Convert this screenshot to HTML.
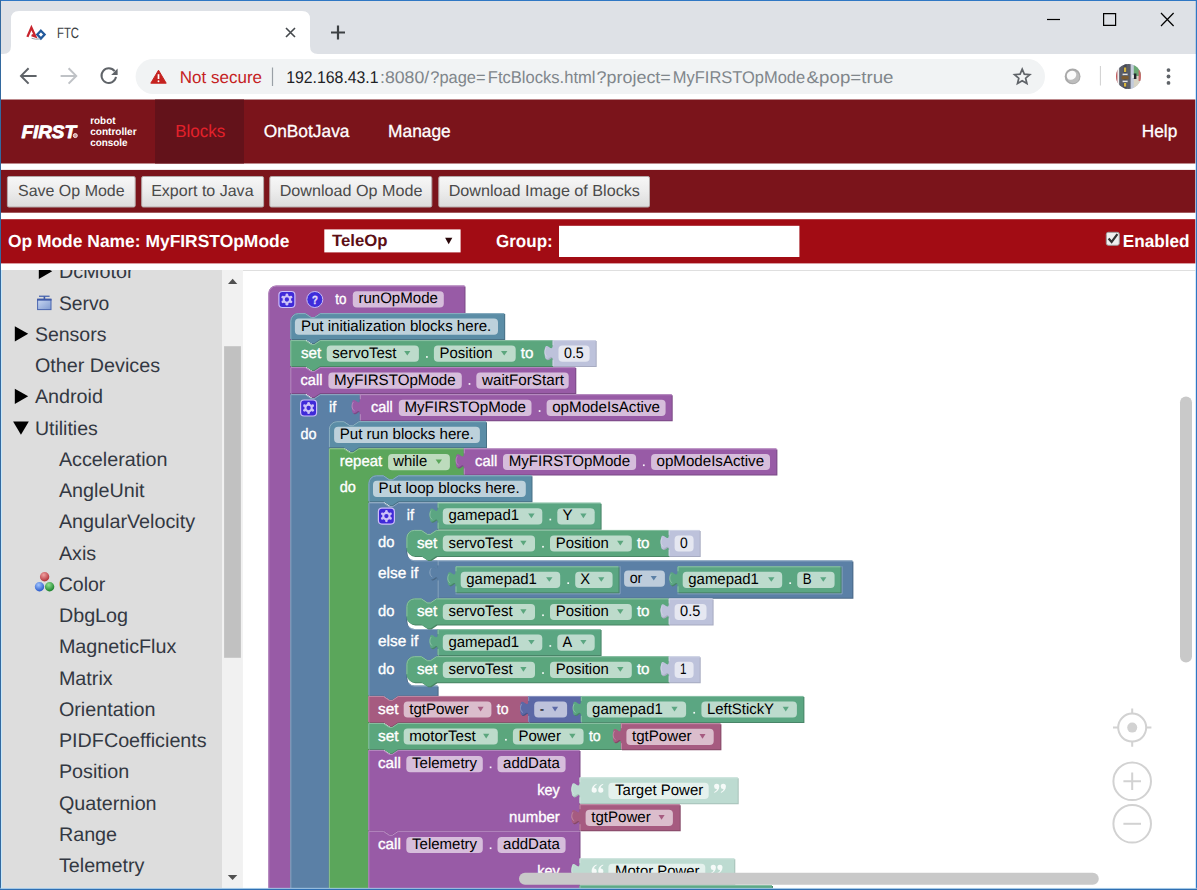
<!DOCTYPE html>
<html><head><meta charset="utf-8"><title>FTC</title>
<style>
html,body{margin:0;padding:0;background:#fff;overflow:hidden;}
body{width:1197px;height:890px;font-family:"Liberation Sans",sans-serif;}
svg{display:block;position:absolute;left:0;top:0;}
text{white-space:pre;font-family:"Liberation Sans",sans-serif;}
</style></head><body>
<svg width="1197" height="890" viewBox="0 0 1197 890" font-family="Liberation Sans, sans-serif" text-rendering="geometricPrecision">
<rect x="0" y="0" width="1197" height="890" fill="#ffffff"/>
<rect x="0" y="0" width="1197" height="54" fill="#dee1e6"/>
<path d="M3 54 Q11 54 11 46 L11 19 Q11 11 19 11 L302 11 Q310 11 310 19 L310 46 Q310 54 318 54 Z" fill="#ffffff"/>
<rect x="0" y="54" width="1197" height="45.5" fill="#ffffff"/>
<g>
<path d="M27.4 36.9 L31.4 27.6 L35.4 36.6 L31.6 35.2" fill="none" stroke="#c8242d" stroke-width="2.3" stroke-linejoin="miter"/>
<path d="M40.9 30.7 L44.6 34.5 L40.9 38.5 L37.3 34.5 Z" fill="none" stroke="#21599c" stroke-width="2.3"/>
<path d="M31.6 38.3 Q35.6 39.8 40.2 38.9" fill="none" stroke="#9aa0aa" stroke-width="1"/>
</g>
<text x="57" y="37.6" font-size="15" fill="#3c4043" textLength="21.99" lengthAdjust="spacingAndGlyphs">FTC</text>
<path d="M286 28 L295 37 M295 28 L286 37" fill="none" stroke="#45494d" stroke-width="1.6"/>
<path d="M331 32.5 L345 32.5 M338 25.5 L338 39.5" fill="none" stroke="#3c4043" stroke-width="2.2"/>
<path d="M1047 19.5 L1060 19.5" fill="none" stroke="#000" stroke-width="1.2"/>
<path d="M1103.6 13.6 L1115.6 13.6 L1115.6 25.4 L1103.6 25.4 Z" fill="none" stroke="#000" stroke-width="1.2"/>
<path d="M1161 13 L1173.6 26 M1173.6 13 L1161 26" fill="none" stroke="#000" stroke-width="1.2"/>
<path d="M36.6 75.9 L22 75.9 M28.6 68.2 L21 75.9 L28.6 83.6" fill="none" stroke="#5f6368" stroke-width="2" stroke-linejoin="miter"/>
<path d="M60.6 75.9 L75.2 75.9 M68.6 68.2 L76.2 75.9 L68.6 83.6" fill="none" stroke="#bfc2c6" stroke-width="2"/>
<path d="M114.6 71.2 A7.3 7.3 0 1 0 116 76.9" fill="none" stroke="#5f6368" stroke-width="2"/>
<path d="M117.6 68.6 L117.6 75 L111.2 75 Z" fill="#5f6368"/>
<rect x="135.6" y="59" width="909.4" height="35" fill="#f1f3f4" rx="17.5"/>
<path d="M158.5 70.2 L166.2 83.2 L150.8 83.2 Z" fill="#c5221f" stroke="#c5221f" stroke-width="1" stroke-linejoin="round"/>
<path d="M158.5 74.2 L158.5 79" fill="none" stroke="#fff" stroke-width="1.7"/>
<circle cx="158.5" cy="81.2" r="0.95" fill="#fff"/>
<text x="179.8" y="83" font-size="17" fill="#c5221f" textLength="82.21" lengthAdjust="spacingAndGlyphs">Not secure</text>
<path d="M272.5 67.5 L272.5 86" fill="none" stroke="#9aa0a6" stroke-width="1.2"/>
<text x="286.2" y="83" font-size="17" fill="#202124" textLength="92.38" lengthAdjust="spacingAndGlyphs">192.168.43.1</text>
<text x="380" y="83" font-size="17" fill="#80868b" textLength="49.22" lengthAdjust="spacingAndGlyphs">:8080/</text>
<text x="430.3" y="83" font-size="17" fill="#80868b" textLength="55.3" lengthAdjust="spacingAndGlyphs">?page=</text>
<text x="487.8" y="83" font-size="17" fill="#80868b" textLength="107.72" lengthAdjust="spacingAndGlyphs">FtcBlocks.html</text>
<text x="596.6" y="83" font-size="17" fill="#80868b" textLength="74.23" lengthAdjust="spacingAndGlyphs">?project=</text>
<text x="672.8" y="83" font-size="17" fill="#80868b" textLength="132.39" lengthAdjust="spacingAndGlyphs">MyFIRSTOpMode</text>
<text x="806.6" y="83" font-size="17" fill="#80868b" textLength="86.96" lengthAdjust="spacingAndGlyphs">&amp;pop=true</text>
<path d="M1022.2 69.1 L1024.32 74.19 L1029.81 74.63 L1025.62 78.21 L1026.9 83.57 L1022.2 80.7 L1017.5 83.57 L1018.78 78.21 L1014.59 74.63 L1020.08 74.19 Z" fill="none" stroke="#5f6368" stroke-width="1.7" stroke-linejoin="miter"/>
<circle cx="1072.6" cy="76.4" r="7.9" fill="#a9a9a9"/>
<circle cx="1073.2" cy="77" r="6.2" fill="#bdbdbd"/>
<ellipse cx="1071.5" cy="75.3" rx="5" ry="4.3" fill="#fbfbfb" transform="rotate(-35 1071.5 75.3)"/>
<path d="M1100.4 66 L1100.4 85.5" fill="none" stroke="#cfcfcf" stroke-width="1"/>
<clipPath id="av"><circle cx="1128.5" cy="76.4" r="12.5"/></clipPath>
<g clip-path="url(#av)">
<rect x="1115" y="63" width="28" height="28" fill="#c9ccd6"/>
<rect x="1115" y="63" width="2.6" height="28" fill="#c45a5a"/>
<rect x="1117.6" y="63" width="1.6" height="28" fill="#eeeeee"/>
<rect x="1119.2" y="63" width="11.6" height="28" fill="#5a5d68"/>
<rect x="1123.6" y="63" width="3" height="28" fill="#474a55"/>
<rect x="1124" y="67.5" width="2.2" height="4.5" fill="#d9b63c"/>
<rect x="1122.6" y="73.6" width="5" height="1.6" fill="#e6e6e6"/>
<rect x="1121.6" y="76" width="7" height="3.4" fill="#7a5a30"/>
<rect x="1122.6" y="80.6" width="5" height="1.6" fill="#e6e6e6"/>
<rect x="1124" y="83" width="2.2" height="3.6" fill="#d9b63c"/>
<rect x="1130.8" y="63" width="3" height="28" fill="#c3cbdc"/>
<rect x="1133.8" y="63" width="7" height="13" fill="#6aa873"/>
<rect x="1133.8" y="76" width="7" height="15" fill="#d8d4c4"/>
<rect x="1133.8" y="73.5" width="2.6" height="5.5" fill="#22252b"/>
<rect x="1132" y="75" width="1.8" height="3" fill="#e8e8e8"/>
<rect x="1138.6" y="70" width="3" height="11" fill="#c86a6a"/>
</g>
<circle cx="1168.5" cy="70.1" r="1.9" fill="#5f6368"/>
<circle cx="1168.5" cy="76.5" r="1.9" fill="#5f6368"/>
<circle cx="1168.5" cy="82.9" r="1.9" fill="#5f6368"/>
<rect x="0" y="99.5" width="1197" height="64" fill="#7b141b"/>
<rect x="155" y="99.5" width="89" height="64" fill="#63121a"/>
<text x="21.4" y="138" font-size="18" fill="#fff" font-weight="bold" font-style="italic" textLength="54.56" lengthAdjust="spacingAndGlyphs" stroke="#fff" stroke-width="0.8" stroke-linejoin="round">FIRST</text>
<circle cx="75.3" cy="135.6" r="2.0" fill="#c99" stroke="#f6e6e6" stroke-width="1.0"/>
<text x="90.2" y="123.9" font-size="10.4" fill="#fff" font-weight="bold" textLength="25.3" lengthAdjust="spacingAndGlyphs">robot</text>
<text x="90.2" y="134.8" font-size="10.4" fill="#fff" font-weight="bold" textLength="46.42" lengthAdjust="spacingAndGlyphs">controller</text>
<text x="90.2" y="145.6" font-size="10.4" fill="#fff" font-weight="bold" textLength="37.39" lengthAdjust="spacingAndGlyphs">console</text>
<text x="175.2" y="136.7" font-size="17.5" fill="#e3212b" textLength="50.11" lengthAdjust="spacingAndGlyphs">Blocks</text>
<text x="263.7" y="136.7" font-size="17.5" fill="#fff" textLength="85.75" lengthAdjust="spacingAndGlyphs" stroke="#fff" stroke-width="0.3">OnBotJava</text>
<text x="388" y="136.7" font-size="17.5" fill="#fff" textLength="62.78" lengthAdjust="spacingAndGlyphs" stroke="#fff" stroke-width="0.3">Manage</text>
<text x="1141.8" y="136.7" font-size="17.5" fill="#fff" textLength="35.43" lengthAdjust="spacingAndGlyphs" stroke="#fff" stroke-width="0.3">Help</text>
<rect x="0" y="169.9" width="1197" height="42.8" fill="#7b141b"/>
<defs><linearGradient id="btn" x1="0" y1="0" x2="0" y2="1"><stop offset="0" stop-color="#f7f7f7"/><stop offset="0.45" stop-color="#ededed"/><stop offset="1" stop-color="#dcdcdc"/></linearGradient></defs>
<rect x="7.4" y="176.5" width="127.8" height="30.5" fill="url(#btn)" rx="1.5" stroke="#b4a9a9" stroke-width="1"/>
<text x="18" y="196.4" font-size="16" fill="#4a4a4a" textLength="106.61" lengthAdjust="spacingAndGlyphs">Save Op Mode</text>
<rect x="141.7" y="176.5" width="121.9" height="30.5" fill="url(#btn)" rx="1.5" stroke="#b4a9a9" stroke-width="1"/>
<text x="151.2" y="196.4" font-size="16" fill="#4a4a4a" textLength="102.35" lengthAdjust="spacingAndGlyphs">Export to Java</text>
<rect x="269.8" y="176.5" width="162" height="30.5" fill="url(#btn)" rx="1.5" stroke="#b4a9a9" stroke-width="1"/>
<text x="279.7" y="196.4" font-size="16" fill="#4a4a4a" textLength="142.68" lengthAdjust="spacingAndGlyphs">Download Op Mode</text>
<rect x="438.8" y="176.5" width="210.7" height="30.5" fill="url(#btn)" rx="1.5" stroke="#b4a9a9" stroke-width="1"/>
<text x="448.7" y="196.4" font-size="16" fill="#4a4a4a" textLength="191.19" lengthAdjust="spacingAndGlyphs">Download Image of Blocks</text>
<rect x="0" y="219.2" width="1197" height="44.2" fill="#a20c14"/>
<text x="7.9" y="246.9" font-size="17.5" fill="#fff" font-weight="bold" textLength="281.49" lengthAdjust="spacingAndGlyphs">Op Mode Name: MyFIRSTOpMode</text>
<rect x="324.3" y="229.4" width="136.3" height="23" fill="#fff"/>
<text x="332" y="246" font-size="16.5" fill="#5c0f15" font-weight="bold" textLength="55.51" lengthAdjust="spacingAndGlyphs">TeleOp</text>
<path d="M445.1 237.8 L452.3 237.8 L448.7 244.3 Z" fill="#2a070a"/>
<text x="496" y="246.9" font-size="17.5" fill="#fff" font-weight="bold" textLength="56.76" lengthAdjust="spacingAndGlyphs">Group:</text>
<rect x="559" y="225.8" width="240.4" height="31.2" fill="#fff"/>
<rect x="1106.3" y="232.3" width="13" height="13" fill="#efefef" rx="2" stroke="#9a9a9a" stroke-width="1"/>
<path d="M1108.6 238.6 L1111.6 242 L1117.4 234.2" fill="none" stroke="#333" stroke-width="2.2"/>
<text x="1122.8" y="247" font-size="17.5" fill="#fff" font-weight="bold" textLength="66.8" lengthAdjust="spacingAndGlyphs">Enabled</text>
<rect x="242.9" y="270" width="953" height="620" fill="#ffffff"/>
<rect x="242.9" y="270" width="953" height="0.9" fill="#dcdcdc"/>
<clipPath id="wsc"><rect x="243" y="271" width="953" height="617.3"/></clipPath>
<g clip-path="url(#wsc)" font-family="Liberation Sans, sans-serif">
<path d="M268.3 293.5 A8 8 0 0 1 276.3 285.5 H464.5 V313.1 H320.3 l-6 4 -3 0 -6 -4 h-7 a8 8 0 0 0 -8 8 v684 a8 8 0 0 0 8 8 H464.5 H276.3 A8 8 0 0 1 268.3 1005.1 Z" fill="#7a4985" transform="translate(1,1)"/>
<path d="M268.3 293.5 A8 8 0 0 1 276.3 285.5 H464.5 V313.1 H320.3 l-6 4 -3 0 -6 -4 h-7 a8 8 0 0 0 -8 8 v684 a8 8 0 0 0 8 8 H464.5 H276.3 A8 8 0 0 1 268.3 1005.1 Z" fill="#985ba6"/>
<path d="M268.8 1005.1 V293.5 A7.5 7.5 0 0 1 276.3 286 H464.5 M292.6 1010.8 a8 8 0 0 0 5.7 2.8 H464.5" fill="none" stroke="#b78cc1" stroke-width="1"/>
<rect x="278.9" y="291.5" width="16" height="16" rx="3.5" fill="#3f2ad8" stroke="#cdbdfa" stroke-width="1.2"/>
<circle cx="286.9" cy="294.8" r="1.35" fill="#cdc2f8"/>
<circle cx="282.83" cy="297.15" r="1.35" fill="#cdc2f8"/>
<circle cx="282.83" cy="301.85" r="1.35" fill="#cdc2f8"/>
<circle cx="286.9" cy="304.2" r="1.35" fill="#cdc2f8"/>
<circle cx="290.97" cy="301.85" r="1.35" fill="#cdc2f8"/>
<circle cx="290.97" cy="297.15" r="1.35" fill="#cdc2f8"/>
<circle cx="286.9" cy="299.5" r="3.2" fill="none" stroke="#cdc2f8" stroke-width="2.1"/>
<circle cx="314.8" cy="299.5" r="8" fill="#3e2ddb" stroke="#c8bdf5" stroke-width="1"/>
<text x="311.9" y="304" font-size="12" fill="#e2dbfb" font-weight="bold" textLength="5.91" lengthAdjust="spacingAndGlyphs" stroke="#e2dbfb" stroke-width="0.4">?</text>
<text x="335.2" y="303.5" font-size="15.2" fill="#fff" textLength="11.19" lengthAdjust="spacingAndGlyphs" stroke="#fff" stroke-width="0.35">to</text>
<rect x="352.8" y="291.2" width="91" height="16.2" fill="#d6bddb" rx="4"/>
<text x="358.4" y="303.3" font-size="15.2" fill="#000" textLength="79.51" lengthAdjust="spacingAndGlyphs">runOpMode</text>
<path d="M290.3 321.1 A8 8 0 0 1 298.3 313.1 H305.3 l6 4 3 0 6 -4 H504.2 V339.1 H320.3 l-6 4 -3 0 -6 -4 H290.3 Z" fill="#497185" transform="translate(1,1)"/>
<path d="M290.3 321.1 A8 8 0 0 1 298.3 313.1 H305.3 l6 4 3 0 6 -4 H504.2 V339.1 H320.3 l-6 4 -3 0 -6 -4 H290.3 Z" fill="#5b8da6"/>
<path d="M290.8 339.1 V321.1 A7.5 7.5 0 0 1 298.3 313.6 H305.3 l6 4 3 0 6 -4 H504.2" fill="none" stroke="#8cafc1" stroke-width="1"/>
<rect x="294.9" y="318.6" width="203.1" height="16.2" fill="#bdd1db" rx="4"/>
<text x="300.9" y="330.7" font-size="15.2" fill="#000" textLength="190.37" lengthAdjust="spacingAndGlyphs">Put initialization blocks here.</text>
<path d="M290.3 340.1 H305.3 l6 4 3 0 6 -4 H552.6 V366.1 H320.3 l-6 4 -3 0 -6 -4 H290.3 Z" fill="#498564" transform="translate(1,1)"/>
<path d="M290.3 340.1 H305.3 l6 4 3 0 6 -4 H552.6 V366.1 H320.3 l-6 4 -3 0 -6 -4 H290.3 Z" fill="#5ba67d"/>
<path d="M290.8 366.1 V340.6 H305.3 l6 4 3 0 6 -4 H552.6" fill="none" stroke="#8cc1a4" stroke-width="1"/>
<text x="300.9" y="357.7" font-size="15.2" fill="#fff" stroke="#fff" stroke-width="0.35">set</text>
<rect x="326.7" y="345.6" width="92.2" height="16.2" fill="#bddbcb" rx="4"/>
<text x="332.3" y="357.7" font-size="15.2" fill="#000" textLength="64.19" lengthAdjust="spacingAndGlyphs">servoTest</text>
<path d="M404.2 351 H410.4 L407.3 355.6 Z" fill="#5ba67d"/>
<rect x="426.05" y="356.1" width="1.7" height="1.7" fill="#fff" fill-opacity="0.95"/>
<rect x="433.9" y="345.6" width="81.8" height="16.2" fill="#bddbcb" rx="4"/>
<text x="439.6" y="357.7" font-size="15.2" fill="#000" textLength="53.07" lengthAdjust="spacingAndGlyphs">Position</text>
<path d="M501 351 H507.4 L504.2 355.6 Z" fill="#5ba67d"/>
<text x="520.8" y="357.7" font-size="15.2" fill="#fff" stroke="#fff" stroke-width="0.35">to</text>
<path d="M552.6 340.1 H595.7 V366.1 H552.6 V360.1 c 0,-10 -8,8 -8,-7.5 s 8,2.5 8,-7.5 Z" fill="#a7abc1" transform="translate(1,1)"/>
<path d="M552.6 340.1 H595.7 V366.1 H552.6 V360.1 c 0,-10 -8,8 -8,-7.5 s 8,2.5 8,-7.5 Z" fill="#bdc2db"/>
<path d="M553.1 366.1 V360.1 M553.1 345.1 V340.6 H595.7 M547.3 356.7 c -3,-1.5 -3,-6.2 -1.2,-8.6" fill="none" stroke="#d1d5e6" stroke-width="1"/>
<rect x="558.5" y="345.6" width="31.1" height="16.2" fill="#e5e7f1" rx="4"/>
<text x="564" y="357.7" font-size="15.2" fill="#000" textLength="19.8" lengthAdjust="spacingAndGlyphs">0.5</text>
<path d="M290.3 367.1 H305.3 l6 4 3 0 6 -4 H575.3 V393.1 H320.3 l-6 4 -3 0 -6 -4 H290.3 Z" fill="#7a4985" transform="translate(1,1)"/>
<path d="M290.3 367.1 H305.3 l6 4 3 0 6 -4 H575.3 V393.1 H320.3 l-6 4 -3 0 -6 -4 H290.3 Z" fill="#985ba6"/>
<path d="M290.8 393.1 V367.6 H305.3 l6 4 3 0 6 -4 H575.3" fill="none" stroke="#b78cc1" stroke-width="1"/>
<text x="300.6" y="384.7" font-size="15.2" fill="#fff" textLength="21.81" lengthAdjust="spacingAndGlyphs" stroke="#fff" stroke-width="0.35">call</text>
<rect x="328.4" y="372.6" width="133.4" height="16.2" fill="#d6bddb" rx="4"/>
<text x="334.1" y="384.7" font-size="15.2" fill="#000" textLength="121.59" lengthAdjust="spacingAndGlyphs">MyFIRSTOpMode</text>
<rect x="468.65" y="383.1" width="1.7" height="1.7" fill="#fff" fill-opacity="0.95"/>
<rect x="476.3" y="372.6" width="92.4" height="16.2" fill="#d6bddb" rx="4"/>
<text x="481.98" y="384.7" font-size="15.2" fill="#000" textLength="82.03" lengthAdjust="spacingAndGlyphs">waitForStart</text>
<path d="M290.3 394.2 H305.3 l6 4 3 0 6 -4 H359.8 V421.1 H358.9 l-6 4 -3 0 -6 -4 h-7 a8 8 0 0 0 -8 8 v684 a8 8 0 0 0 8 8 H359.8 H320.3 l-6 4 -3 0 -6 -4 H290.3 Z" fill="#496785" transform="translate(1,1)"/>
<path d="M290.3 394.2 H305.3 l6 4 3 0 6 -4 H359.8 V421.1 H358.9 l-6 4 -3 0 -6 -4 h-7 a8 8 0 0 0 -8 8 v684 a8 8 0 0 0 8 8 H359.8 H320.3 l-6 4 -3 0 -6 -4 H290.3 Z" fill="#5b80a6"/>
<path d="M290.8 1121.1 V394.7 H305.3 l6 4 3 0 6 -4 H359.8 M331.2 1118.8 a8 8 0 0 0 5.7 2.8 H359.8" fill="none" stroke="#8ca6c1" stroke-width="1"/>
<rect x="300.6" y="400" width="16" height="16" rx="3.5" fill="#3f2ad8" stroke="#cdbdfa" stroke-width="1.2"/>
<circle cx="308.6" cy="403.3" r="1.35" fill="#cdc2f8"/>
<circle cx="304.53" cy="405.65" r="1.35" fill="#cdc2f8"/>
<circle cx="304.53" cy="410.35" r="1.35" fill="#cdc2f8"/>
<circle cx="308.6" cy="412.7" r="1.35" fill="#cdc2f8"/>
<circle cx="312.67" cy="410.35" r="1.35" fill="#cdc2f8"/>
<circle cx="312.67" cy="405.65" r="1.35" fill="#cdc2f8"/>
<circle cx="308.6" cy="408" r="3.2" fill="none" stroke="#cdc2f8" stroke-width="2.1"/>
<text x="329" y="411.8" font-size="15.2" fill="#fff" textLength="7.3" lengthAdjust="spacingAndGlyphs" stroke="#fff" stroke-width="0.35">if</text>
<text x="300.6" y="438.7" font-size="15.2" fill="#fff" textLength="16.03" lengthAdjust="spacingAndGlyphs" stroke="#fff" stroke-width="0.35">do</text>
<path d="M359.8 394.2 H671.7 V420.2 H359.8 V414.2 c 0,-10 -8,8 -8,-7.5 s 8,2.5 8,-7.5 Z" fill="#7a4985" transform="translate(1,1)"/>
<path d="M359.8 394.2 H671.7 V420.2 H359.8 V414.2 c 0,-10 -8,8 -8,-7.5 s 8,2.5 8,-7.5 Z" fill="#985ba6"/>
<path d="M360.3 420.2 V414.2 M360.3 399.2 V394.7 H671.7 M354.5 410.8 c -3,-1.5 -3,-6.2 -1.2,-8.6" fill="none" stroke="#b78cc1" stroke-width="1"/>
<text x="371" y="411.8" font-size="15.2" fill="#fff" textLength="21.71" lengthAdjust="spacingAndGlyphs" stroke="#fff" stroke-width="0.35">call</text>
<rect x="398.8" y="399.7" width="132.7" height="16.2" fill="#d6bddb" rx="4"/>
<text x="404.4" y="411.8" font-size="15.2" fill="#000" textLength="121.59" lengthAdjust="spacingAndGlyphs">MyFIRSTOpMode</text>
<rect x="538.75" y="410.2" width="1.7" height="1.7" fill="#fff" fill-opacity="0.95"/>
<rect x="546.6" y="399.7" width="119" height="16.2" fill="#d6bddb" rx="4"/>
<text x="552.2" y="411.8" font-size="15.2" fill="#000" textLength="107.8" lengthAdjust="spacingAndGlyphs">opModeIsActive</text>
<path d="M328.9 429.2 A8 8 0 0 1 336.9 421.2 H343.9 l6 4 3 0 6 -4 H486 V447.2 H358.9 l-6 4 -3 0 -6 -4 H328.9 Z" fill="#497185" transform="translate(1,1)"/>
<path d="M328.9 429.2 A8 8 0 0 1 336.9 421.2 H343.9 l6 4 3 0 6 -4 H486 V447.2 H358.9 l-6 4 -3 0 -6 -4 H328.9 Z" fill="#5b8da6"/>
<path d="M329.4 447.2 V429.2 A7.5 7.5 0 0 1 336.9 421.7 H343.9 l6 4 3 0 6 -4 H486" fill="none" stroke="#8cafc1" stroke-width="1"/>
<rect x="334.1" y="426.7" width="145.8" height="16.2" fill="#bdd1db" rx="4"/>
<text x="339.7" y="438.8" font-size="15.2" fill="#000" textLength="134.28" lengthAdjust="spacingAndGlyphs">Put run blocks here.</text>
<path d="M328.9 448.3 H343.9 l6 4 3 0 6 -4 H463.8 V475.2 H398.4 l-6 4 -3 0 -6 -4 h-7 a8 8 0 0 0 -8 8 v684 a8 8 0 0 0 8 8 H463.8 H358.9 l-6 4 -3 0 -6 -4 H328.9 Z" fill="#498549" transform="translate(1,1)"/>
<path d="M328.9 448.3 H343.9 l6 4 3 0 6 -4 H463.8 V475.2 H398.4 l-6 4 -3 0 -6 -4 h-7 a8 8 0 0 0 -8 8 v684 a8 8 0 0 0 8 8 H463.8 H358.9 l-6 4 -3 0 -6 -4 H328.9 Z" fill="#5ba65b"/>
<path d="M329.4 1175.2 V448.8 H343.9 l6 4 3 0 6 -4 H463.8 M370.7 1172.9 a8 8 0 0 0 5.7 2.8 H463.8" fill="none" stroke="#8cc18c" stroke-width="1"/>
<text x="339.8" y="466.1" font-size="15.2" fill="#fff" textLength="42.41" lengthAdjust="spacingAndGlyphs" stroke="#fff" stroke-width="0.35">repeat</text>
<rect x="388.1" y="454" width="61.8" height="16.2" fill="#bddbbd" rx="4"/>
<text x="393.37" y="466.1" font-size="15.2" fill="#000" textLength="33.81" lengthAdjust="spacingAndGlyphs">while</text>
<path d="M435.6 459.4 H442 L438.8 464 Z" fill="#5ba65b"/>
<text x="339.8" y="492.3" font-size="15.2" fill="#fff" textLength="16.13" lengthAdjust="spacingAndGlyphs" stroke="#fff" stroke-width="0.35">do</text>
<path d="M463.8 448.4 H776.4 V474.4 H463.8 V468.4 c 0,-10 -8,8 -8,-7.5 s 8,2.5 8,-7.5 Z" fill="#7a4985" transform="translate(1,1)"/>
<path d="M463.8 448.4 H776.4 V474.4 H463.8 V468.4 c 0,-10 -8,8 -8,-7.5 s 8,2.5 8,-7.5 Z" fill="#985ba6"/>
<path d="M464.3 474.4 V468.4 M464.3 453.4 V448.9 H776.4 M458.5 465 c -3,-1.5 -3,-6.2 -1.2,-8.6" fill="none" stroke="#b78cc1" stroke-width="1"/>
<text x="475" y="466" font-size="15.2" fill="#fff" textLength="22.21" lengthAdjust="spacingAndGlyphs" stroke="#fff" stroke-width="0.35">call</text>
<rect x="503" y="453.9" width="133.1" height="16.2" fill="#d6bddb" rx="4"/>
<text x="508.7" y="466" font-size="15.2" fill="#000" textLength="121.49" lengthAdjust="spacingAndGlyphs">MyFIRSTOpMode</text>
<rect x="642.95" y="464.4" width="1.7" height="1.7" fill="#fff" fill-opacity="0.95"/>
<rect x="651.1" y="453.9" width="118.9" height="16.2" fill="#d6bddb" rx="4"/>
<text x="656.5" y="466" font-size="15.2" fill="#000" textLength="107.6" lengthAdjust="spacingAndGlyphs">opModeIsActive</text>
<path d="M368.4 483.3 A8 8 0 0 1 376.4 475.3 H383.4 l6 4 3 0 6 -4 H531.5 V501.3 H398.4 l-6 4 -3 0 -6 -4 H368.4 Z" fill="#497185" transform="translate(1,1)"/>
<path d="M368.4 483.3 A8 8 0 0 1 376.4 475.3 H383.4 l6 4 3 0 6 -4 H531.5 V501.3 H398.4 l-6 4 -3 0 -6 -4 H368.4 Z" fill="#5b8da6"/>
<path d="M368.9 501.3 V483.3 A7.5 7.5 0 0 1 376.4 475.8 H383.4 l6 4 3 0 6 -4 H531.5" fill="none" stroke="#8cafc1" stroke-width="1"/>
<rect x="373" y="480.8" width="152.8" height="16.2" fill="#bdd1db" rx="4"/>
<text x="378.6" y="492.9" font-size="15.2" fill="#000" textLength="140.99" lengthAdjust="spacingAndGlyphs">Put loop blocks here.</text>
<path d="M368.4 502.4 H383.4 l6 4 3 0 6 -4 H437.6 V529.9 H436.4 l-6 4 -3 0 -6 -4 h-7 a8 8 0 0 0 -8 8 v14.4 a8 8 0 0 0 8 8 H437.6 V598.3 H436.4 l-6 4 -3 0 -6 -4 h-7 a8 8 0 0 0 -8 8 v14.7 a8 8 0 0 0 8 8 H437.6 V656.2 H436.4 l-6 4 -3 0 -6 -4 h-7 a8 8 0 0 0 -8 8 v13.4 a8 8 0 0 0 8 8 H437.6 V695.5 H398.4 l-6 4 -3 0 -6 -4 H368.4 Z" fill="#496785" transform="translate(1,1)"/>
<path d="M368.4 502.4 H383.4 l6 4 3 0 6 -4 H437.6 V529.9 H436.4 l-6 4 -3 0 -6 -4 h-7 a8 8 0 0 0 -8 8 v14.4 a8 8 0 0 0 8 8 H437.6 V598.3 H436.4 l-6 4 -3 0 -6 -4 h-7 a8 8 0 0 0 -8 8 v14.7 a8 8 0 0 0 8 8 H437.6 V656.2 H436.4 l-6 4 -3 0 -6 -4 h-7 a8 8 0 0 0 -8 8 v13.4 a8 8 0 0 0 8 8 H437.6 V695.5 H398.4 l-6 4 -3 0 -6 -4 H368.4 Z" fill="#5b80a6"/>
<path d="M368.9 695.5 V502.9 H383.4 l6 4 3 0 6 -4 H437.6 M408.7 558 a8 8 0 0 0 5.7 2.8 H437.6 M408.7 626.7 a8 8 0 0 0 5.7 2.8 H437.6 M408.7 683.3 a8 8 0 0 0 5.7 2.8 H437.6" fill="none" stroke="#8ca6c1" stroke-width="1"/>
<rect x="378.4" y="508.1" width="16" height="16" rx="3.5" fill="#3f2ad8" stroke="#cdbdfa" stroke-width="1.2"/>
<circle cx="386.4" cy="511.4" r="1.35" fill="#cdc2f8"/>
<circle cx="382.33" cy="513.75" r="1.35" fill="#cdc2f8"/>
<circle cx="382.33" cy="518.45" r="1.35" fill="#cdc2f8"/>
<circle cx="386.4" cy="520.8" r="1.35" fill="#cdc2f8"/>
<circle cx="390.47" cy="518.45" r="1.35" fill="#cdc2f8"/>
<circle cx="390.47" cy="513.75" r="1.35" fill="#cdc2f8"/>
<circle cx="386.4" cy="516.1" r="3.2" fill="none" stroke="#cdc2f8" stroke-width="2.1"/>
<text x="406.8" y="520.2" font-size="15.2" fill="#fff" textLength="7.3" lengthAdjust="spacingAndGlyphs" stroke="#fff" stroke-width="0.35">if</text>
<text x="378" y="547.1" font-size="15.2" fill="#fff" textLength="16.43" lengthAdjust="spacingAndGlyphs" stroke="#fff" stroke-width="0.35">do</text>
<text x="378" y="577.8" font-size="15.2" fill="#fff" textLength="40.26" lengthAdjust="spacingAndGlyphs" stroke="#fff" stroke-width="0.35">else if</text>
<text x="378" y="615.8" font-size="15.2" fill="#fff" textLength="16.43" lengthAdjust="spacingAndGlyphs" stroke="#fff" stroke-width="0.35">do</text>
<text x="378" y="646.2" font-size="15.2" fill="#fff" textLength="40.26" lengthAdjust="spacingAndGlyphs" stroke="#fff" stroke-width="0.35">else if</text>
<text x="378" y="673.5" font-size="15.2" fill="#fff" textLength="16.43" lengthAdjust="spacingAndGlyphs" stroke="#fff" stroke-width="0.35">do</text>
<path d="M437.6 502.7 H600.6 V528.7 H437.6 V522.7 c 0,-10 -8,8 -8,-7.5 s 8,2.5 8,-7.5 Z" fill="#498568" transform="translate(1,1)"/>
<path d="M437.6 502.7 H600.6 V528.7 H437.6 V522.7 c 0,-10 -8,8 -8,-7.5 s 8,2.5 8,-7.5 Z" fill="#5ba682"/>
<path d="M438.1 528.7 V522.7 M438.1 507.7 V503.2 H600.6 M432.3 519.3 c -3,-1.5 -3,-6.2 -1.2,-8.6" fill="none" stroke="#8cc1a7" stroke-width="1"/>
<rect x="442.8" y="508.2" width="99.5" height="16.2" fill="#bddbcd" rx="4"/>
<text x="448.4" y="520.3" font-size="15.2" fill="#000" textLength="70.62" lengthAdjust="spacingAndGlyphs">gamepad1</text>
<path d="M528.2 513.6 H534.6 L531.4 518.2 Z" fill="#5ba682"/>
<rect x="549.45" y="518.7" width="1.7" height="1.7" fill="#fff" fill-opacity="0.95"/>
<rect x="557.3" y="508.2" width="37.4" height="16.2" fill="#bddbcd" rx="4"/>
<text x="562.5" y="520.3" font-size="15.2" fill="#000" textLength="10.13" lengthAdjust="spacingAndGlyphs">Y</text>
<path d="M580.3 513.6 H586.5 L583.4 518.2 Z" fill="#5ba682"/>
<path d="M406.4 537.9 A8 8 0 0 1 414.4 529.9 H421.4 l6 4 3 0 6 -4 H668.7 V555.9 H436.4 l-6 4 -3 0 -6 -4 H414.4 A8 8 0 0 1 406.4 547.9 Z" fill="#498564" transform="translate(1,1)"/>
<path d="M406.4 537.9 A8 8 0 0 1 414.4 529.9 H421.4 l6 4 3 0 6 -4 H668.7 V555.9 H436.4 l-6 4 -3 0 -6 -4 H414.4 A8 8 0 0 1 406.4 547.9 Z" fill="#5ba67d"/>
<path d="M406.9 547.9 V537.9 A7.5 7.5 0 0 1 414.4 530.4 H421.4 l6 4 3 0 6 -4 H668.7" fill="none" stroke="#8cc1a4" stroke-width="1"/>
<text x="417" y="547.5" font-size="15.2" fill="#fff" stroke="#fff" stroke-width="0.35">set</text>
<rect x="442.8" y="535.4" width="92.2" height="16.2" fill="#bddbcb" rx="4"/>
<text x="448.4" y="547.5" font-size="15.2" fill="#000" textLength="64.19" lengthAdjust="spacingAndGlyphs">servoTest</text>
<path d="M520.3 540.8 H526.5 L523.4 545.4 Z" fill="#5ba67d"/>
<rect x="542.15" y="545.9" width="1.7" height="1.7" fill="#fff" fill-opacity="0.95"/>
<rect x="550" y="535.4" width="81.8" height="16.2" fill="#bddbcb" rx="4"/>
<text x="555.7" y="547.5" font-size="15.2" fill="#000" textLength="53.07" lengthAdjust="spacingAndGlyphs">Position</text>
<path d="M617.1 540.8 H623.5 L620.3 545.4 Z" fill="#5ba67d"/>
<text x="636.9" y="547.5" font-size="15.2" fill="#fff" stroke="#fff" stroke-width="0.35">to</text>
<path d="M668.7 529.9 H699.7 V555.9 H668.7 V549.9 c 0,-10 -8,8 -8,-7.5 s 8,2.5 8,-7.5 Z" fill="#a7abc1" transform="translate(1,1)"/>
<path d="M668.7 529.9 H699.7 V555.9 H668.7 V549.9 c 0,-10 -8,8 -8,-7.5 s 8,2.5 8,-7.5 Z" fill="#bdc2db"/>
<path d="M669.2 555.9 V549.9 M669.2 534.9 V530.4 H699.7 M663.4 546.5 c -3,-1.5 -3,-6.2 -1.2,-8.6" fill="none" stroke="#d1d5e6" stroke-width="1"/>
<rect x="674.6" y="535.4" width="19" height="16.2" fill="#e5e7f1" rx="4"/>
<text x="680.1" y="547.5" font-size="15.2" fill="#000" textLength="7.72" lengthAdjust="spacingAndGlyphs">0</text>
<path d="M437.6 560.4 H852.4 V597.7 H437.6 V580.4 c 0,-10 -8,8 -8,-7.5 s 8,2.5 8,-7.5 Z" fill="#496785" transform="translate(1,1)"/>
<path d="M437.6 560.4 H852.4 V597.7 H437.6 V580.4 c 0,-10 -8,8 -8,-7.5 s 8,2.5 8,-7.5 Z" fill="#5b80a6"/>
<path d="M438.1 597.7 V580.4 M438.1 565.4 V560.9 H852.4 M432.3 577 c -3,-1.5 -3,-6.2 -1.2,-8.6" fill="none" stroke="#8ca6c1" stroke-width="1"/>
<path d="M620 566.3 V593.8 H455.5" fill="none" stroke="#8ca6c1" stroke-width="1"/>
<path d="M455.5 566.3 H618.5 V592.3 H455.5 V586.3 c 0,-10 -8,8 -8,-7.5 s 8,2.5 8,-7.5 Z" fill="#498568" transform="translate(1,1)"/>
<path d="M455.5 566.3 H618.5 V592.3 H455.5 V586.3 c 0,-10 -8,8 -8,-7.5 s 8,2.5 8,-7.5 Z" fill="#5ba682"/>
<path d="M456 592.3 V586.3 M456 571.3 V566.8 H618.5 M450.2 582.9 c -3,-1.5 -3,-6.2 -1.2,-8.6" fill="none" stroke="#8cc1a7" stroke-width="1"/>
<rect x="460.7" y="571.8" width="99.5" height="16.2" fill="#bddbcd" rx="4"/>
<text x="466.3" y="583.9" font-size="15.2" fill="#000" textLength="70.62" lengthAdjust="spacingAndGlyphs">gamepad1</text>
<path d="M546.1 577.2 H552.5 L549.3 581.8 Z" fill="#5ba682"/>
<rect x="567.35" y="582.3" width="1.7" height="1.7" fill="#fff" fill-opacity="0.95"/>
<rect x="575.2" y="571.8" width="37.4" height="16.2" fill="#bddbcd" rx="4"/>
<text x="580.3" y="583.9" font-size="15.2" fill="#000" textLength="9.83" lengthAdjust="spacingAndGlyphs">X</text>
<path d="M598.2 577.2 H604.4 L601.3 581.8 Z" fill="#5ba682"/>
<rect x="624.1" y="570.6" width="40.8" height="16.2" fill="#bdccdb" rx="4"/>
<text x="629.7" y="582.7" font-size="15.2" fill="#000" textLength="12.69" lengthAdjust="spacingAndGlyphs">or</text>
<path d="M650.7 576 H656.8 L653.75 580.6 Z" fill="#5b80a6"/>
<path d="M842 566.3 V593.8 H677.5" fill="none" stroke="#8ca6c1" stroke-width="1"/>
<path d="M677.5 566.3 H840.5 V592.3 H677.5 V586.3 c 0,-10 -8,8 -8,-7.5 s 8,2.5 8,-7.5 Z" fill="#498568" transform="translate(1,1)"/>
<path d="M677.5 566.3 H840.5 V592.3 H677.5 V586.3 c 0,-10 -8,8 -8,-7.5 s 8,2.5 8,-7.5 Z" fill="#5ba682"/>
<path d="M678 592.3 V586.3 M678 571.3 V566.8 H840.5 M672.2 582.9 c -3,-1.5 -3,-6.2 -1.2,-8.6" fill="none" stroke="#8cc1a7" stroke-width="1"/>
<rect x="682.7" y="571.8" width="99.5" height="16.2" fill="#bddbcd" rx="4"/>
<text x="688.3" y="583.9" font-size="15.2" fill="#000" textLength="70.62" lengthAdjust="spacingAndGlyphs">gamepad1</text>
<path d="M768.1 577.2 H774.5 L771.3 581.8 Z" fill="#5ba682"/>
<rect x="789.35" y="582.3" width="1.7" height="1.7" fill="#fff" fill-opacity="0.95"/>
<rect x="797.2" y="571.8" width="37.4" height="16.2" fill="#bddbcd" rx="4"/>
<text x="802.8" y="583.9" font-size="15.2" fill="#000" textLength="8.83" lengthAdjust="spacingAndGlyphs">B</text>
<path d="M820.2 577.2 H826.4 L823.3 581.8 Z" fill="#5ba682"/>
<path d="M406.4 606.4 A8 8 0 0 1 414.4 598.4 H421.4 l6 4 3 0 6 -4 H668.7 V624.4 H436.4 l-6 4 -3 0 -6 -4 H414.4 A8 8 0 0 1 406.4 616.4 Z" fill="#498564" transform="translate(1,1)"/>
<path d="M406.4 606.4 A8 8 0 0 1 414.4 598.4 H421.4 l6 4 3 0 6 -4 H668.7 V624.4 H436.4 l-6 4 -3 0 -6 -4 H414.4 A8 8 0 0 1 406.4 616.4 Z" fill="#5ba67d"/>
<path d="M406.9 616.4 V606.4 A7.5 7.5 0 0 1 414.4 598.9 H421.4 l6 4 3 0 6 -4 H668.7" fill="none" stroke="#8cc1a4" stroke-width="1"/>
<text x="417" y="616" font-size="15.2" fill="#fff" stroke="#fff" stroke-width="0.35">set</text>
<rect x="442.8" y="603.9" width="92.2" height="16.2" fill="#bddbcb" rx="4"/>
<text x="448.4" y="616" font-size="15.2" fill="#000" textLength="64.19" lengthAdjust="spacingAndGlyphs">servoTest</text>
<path d="M520.3 609.3 H526.5 L523.4 613.9 Z" fill="#5ba67d"/>
<rect x="542.15" y="614.4" width="1.7" height="1.7" fill="#fff" fill-opacity="0.95"/>
<rect x="550" y="603.9" width="81.8" height="16.2" fill="#bddbcb" rx="4"/>
<text x="555.7" y="616" font-size="15.2" fill="#000" textLength="53.07" lengthAdjust="spacingAndGlyphs">Position</text>
<path d="M617.1 609.3 H623.5 L620.3 613.9 Z" fill="#5ba67d"/>
<text x="636.9" y="616" font-size="15.2" fill="#fff" stroke="#fff" stroke-width="0.35">to</text>
<path d="M668.7 598.4 H712.6 V624.4 H668.7 V618.4 c 0,-10 -8,8 -8,-7.5 s 8,2.5 8,-7.5 Z" fill="#a7abc1" transform="translate(1,1)"/>
<path d="M668.7 598.4 H712.6 V624.4 H668.7 V618.4 c 0,-10 -8,8 -8,-7.5 s 8,2.5 8,-7.5 Z" fill="#bdc2db"/>
<path d="M669.2 624.4 V618.4 M669.2 603.4 V598.9 H712.6 M663.4 615 c -3,-1.5 -3,-6.2 -1.2,-8.6" fill="none" stroke="#d1d5e6" stroke-width="1"/>
<rect x="674.6" y="603.9" width="31.9" height="16.2" fill="#e5e7f1" rx="4"/>
<text x="680.1" y="616" font-size="15.2" fill="#000" textLength="20.2" lengthAdjust="spacingAndGlyphs">0.5</text>
<path d="M437.6 629.1 H600.6 V655.1 H437.6 V649.1 c 0,-10 -8,8 -8,-7.5 s 8,2.5 8,-7.5 Z" fill="#498568" transform="translate(1,1)"/>
<path d="M437.6 629.1 H600.6 V655.1 H437.6 V649.1 c 0,-10 -8,8 -8,-7.5 s 8,2.5 8,-7.5 Z" fill="#5ba682"/>
<path d="M438.1 655.1 V649.1 M438.1 634.1 V629.6 H600.6 M432.3 645.7 c -3,-1.5 -3,-6.2 -1.2,-8.6" fill="none" stroke="#8cc1a7" stroke-width="1"/>
<rect x="442.8" y="634.6" width="99.5" height="16.2" fill="#bddbcd" rx="4"/>
<text x="448.4" y="646.7" font-size="15.2" fill="#000" textLength="70.62" lengthAdjust="spacingAndGlyphs">gamepad1</text>
<path d="M528.2 640 H534.6 L531.4 644.6 Z" fill="#5ba682"/>
<rect x="549.45" y="645.1" width="1.7" height="1.7" fill="#fff" fill-opacity="0.95"/>
<rect x="557.3" y="634.6" width="37.4" height="16.2" fill="#bddbcd" rx="4"/>
<text x="562.5" y="646.7" font-size="15.2" fill="#000" textLength="9.66" lengthAdjust="spacingAndGlyphs">A</text>
<path d="M580.3 640 H586.5 L583.4 644.6 Z" fill="#5ba682"/>
<path d="M406.4 664.2 A8 8 0 0 1 414.4 656.2 H421.4 l6 4 3 0 6 -4 H668.7 V682.2 H436.4 l-6 4 -3 0 -6 -4 H414.4 A8 8 0 0 1 406.4 674.2 Z" fill="#498564" transform="translate(1,1)"/>
<path d="M406.4 664.2 A8 8 0 0 1 414.4 656.2 H421.4 l6 4 3 0 6 -4 H668.7 V682.2 H436.4 l-6 4 -3 0 -6 -4 H414.4 A8 8 0 0 1 406.4 674.2 Z" fill="#5ba67d"/>
<path d="M406.9 674.2 V664.2 A7.5 7.5 0 0 1 414.4 656.7 H421.4 l6 4 3 0 6 -4 H668.7" fill="none" stroke="#8cc1a4" stroke-width="1"/>
<text x="417" y="673.8" font-size="15.2" fill="#fff" stroke="#fff" stroke-width="0.35">set</text>
<rect x="442.8" y="661.7" width="92.2" height="16.2" fill="#bddbcb" rx="4"/>
<text x="448.4" y="673.8" font-size="15.2" fill="#000" textLength="64.19" lengthAdjust="spacingAndGlyphs">servoTest</text>
<path d="M520.3 667.1 H526.5 L523.4 671.7 Z" fill="#5ba67d"/>
<rect x="542.15" y="672.2" width="1.7" height="1.7" fill="#fff" fill-opacity="0.95"/>
<rect x="550" y="661.7" width="81.8" height="16.2" fill="#bddbcb" rx="4"/>
<text x="555.7" y="673.8" font-size="15.2" fill="#000" textLength="53.07" lengthAdjust="spacingAndGlyphs">Position</text>
<path d="M617.1 667.1 H623.5 L620.3 671.7 Z" fill="#5ba67d"/>
<text x="636.9" y="673.8" font-size="15.2" fill="#fff" stroke="#fff" stroke-width="0.35">to</text>
<path d="M668.7 656.2 H699.7 V682.2 H668.7 V676.2 c 0,-10 -8,8 -8,-7.5 s 8,2.5 8,-7.5 Z" fill="#a7abc1" transform="translate(1,1)"/>
<path d="M668.7 656.2 H699.7 V682.2 H668.7 V676.2 c 0,-10 -8,8 -8,-7.5 s 8,2.5 8,-7.5 Z" fill="#bdc2db"/>
<path d="M669.2 682.2 V676.2 M669.2 661.2 V656.7 H699.7 M663.4 672.8 c -3,-1.5 -3,-6.2 -1.2,-8.6" fill="none" stroke="#d1d5e6" stroke-width="1"/>
<rect x="674.6" y="661.7" width="19" height="16.2" fill="#e5e7f1" rx="4"/>
<text x="680.1" y="673.8" font-size="15.2" fill="#000" textLength="6.51" lengthAdjust="spacingAndGlyphs">1</text>
<path d="M368.3 695.9 H383.3 l6 4 3 0 6 -4 H528.2 V721.9 H398.3 l-6 4 -3 0 -6 -4 H368.3 Z" fill="#854967" transform="translate(1,1)"/>
<path d="M368.3 695.9 H383.3 l6 4 3 0 6 -4 H528.2 V721.9 H398.3 l-6 4 -3 0 -6 -4 H368.3 Z" fill="#a65b80"/>
<path d="M368.8 721.9 V696.4 H383.3 l6 4 3 0 6 -4 H528.2" fill="none" stroke="#c18ca6" stroke-width="1"/>
<text x="378" y="714.4" font-size="15.2" fill="#fff" textLength="20.58" lengthAdjust="spacingAndGlyphs" stroke="#fff" stroke-width="0.35">set</text>
<rect x="403.7" y="701.4" width="87.7" height="16.2" fill="#dbbdcc" rx="4"/>
<text x="409.2" y="713.5" font-size="15.2" fill="#000" textLength="59.62" lengthAdjust="spacingAndGlyphs">tgtPower</text>
<path d="M477.6 706.8 H483.6 L480.6 711.4 Z" fill="#a65b80"/>
<text x="496.8" y="714.4" font-size="15.2" fill="#fff" textLength="11.69" lengthAdjust="spacingAndGlyphs" stroke="#fff" stroke-width="0.35">to</text>
<path d="M528.2 695.9 H580.8 V721.9 H528.2 V715.9 c 0,-10 -8,8 -8,-7.5 s 8,2.5 8,-7.5 Z" fill="#495385" transform="translate(1,1)"/>
<path d="M528.2 695.9 H580.8 V721.9 H528.2 V715.9 c 0,-10 -8,8 -8,-7.5 s 8,2.5 8,-7.5 Z" fill="#5b68a6"/>
<path d="M528.7 721.9 V715.9 M528.7 700.9 V696.4 H580.8 M522.9 712.5 c -3,-1.5 -3,-6.2 -1.2,-8.6" fill="none" stroke="#8c95c1" stroke-width="1"/>
<rect x="534.2" y="701.4" width="32.9" height="16.2" fill="#bdc2db" rx="4"/>
<text x="539.7" y="713.5" font-size="15.2" fill="#000" textLength="4.47" lengthAdjust="spacingAndGlyphs">-</text>
<path d="M552 706.8 H558.1 L555.05 711.4 Z" fill="#5b68a6"/>
<path d="M580.8 695.9 H803.4 V721.9 H580.8 V715.9 c 0,-10 -8,8 -8,-7.5 s 8,2.5 8,-7.5 Z" fill="#498568" transform="translate(1,1)"/>
<path d="M580.8 695.9 H803.4 V721.9 H580.8 V715.9 c 0,-10 -8,8 -8,-7.5 s 8,2.5 8,-7.5 Z" fill="#5ba682"/>
<path d="M581.3 721.9 V715.9 M581.3 700.9 V696.4 H803.4 M575.5 712.5 c -3,-1.5 -3,-6.2 -1.2,-8.6" fill="none" stroke="#8cc1a7" stroke-width="1"/>
<rect x="586.9" y="701.4" width="99.2" height="16.2" fill="#bddbcd" rx="4"/>
<text x="592.1" y="713.5" font-size="15.2" fill="#000" textLength="70.72" lengthAdjust="spacingAndGlyphs">gamepad1</text>
<path d="M671.4 706.8 H677.6 L674.5 711.4 Z" fill="#5ba682"/>
<rect x="693.35" y="711.9" width="1.7" height="1.7" fill="#fff" fill-opacity="0.95"/>
<rect x="701.4" y="701.4" width="95.5" height="16.2" fill="#bddbcd" rx="4"/>
<text x="707" y="713.5" font-size="15.2" fill="#000" textLength="67.03" lengthAdjust="spacingAndGlyphs">LeftStickY</text>
<path d="M782.7 706.8 H788.8 L785.75 711.4 Z" fill="#5ba682"/>
<path d="M368.3 722.9 H383.3 l6 4 3 0 6 -4 H620.9 V748.9 H398.3 l-6 4 -3 0 -6 -4 H368.3 Z" fill="#498564" transform="translate(1,1)"/>
<path d="M368.3 722.9 H383.3 l6 4 3 0 6 -4 H620.9 V748.9 H398.3 l-6 4 -3 0 -6 -4 H368.3 Z" fill="#5ba67d"/>
<path d="M368.8 748.9 V723.4 H383.3 l6 4 3 0 6 -4 H620.9" fill="none" stroke="#8cc1a4" stroke-width="1"/>
<text x="378" y="741.4" font-size="15.2" fill="#fff" textLength="20.58" lengthAdjust="spacingAndGlyphs" stroke="#fff" stroke-width="0.35">set</text>
<rect x="403.7" y="728.4" width="94.1" height="16.2" fill="#bddbcb" rx="4"/>
<text x="409.2" y="740.5" font-size="15.2" fill="#000" textLength="66.6" lengthAdjust="spacingAndGlyphs">motorTest</text>
<path d="M483.1 733.8 H489.3 L486.2 738.4 Z" fill="#5ba67d"/>
<rect x="505.05" y="738.9" width="1.7" height="1.7" fill="#fff" fill-opacity="0.95"/>
<rect x="512.9" y="728.4" width="70.7" height="16.2" fill="#bddbcb" rx="4"/>
<text x="518.5" y="740.5" font-size="15.2" fill="#000" textLength="42.39" lengthAdjust="spacingAndGlyphs">Power</text>
<path d="M569.2 733.8 H575.5 L572.35 738.4 Z" fill="#5ba67d"/>
<text x="588.9" y="741.4" font-size="15.2" fill="#fff" textLength="11.79" lengthAdjust="spacingAndGlyphs" stroke="#fff" stroke-width="0.35">to</text>
<path d="M620.9 723.2 H720.4 V749.2 H620.9 V743.2 c 0,-10 -8,8 -8,-7.5 s 8,2.5 8,-7.5 Z" fill="#854967" transform="translate(1,1)"/>
<path d="M620.9 723.2 H720.4 V749.2 H620.9 V743.2 c 0,-10 -8,8 -8,-7.5 s 8,2.5 8,-7.5 Z" fill="#a65b80"/>
<path d="M621.4 749.2 V743.2 M621.4 728.2 V723.7 H720.4 M615.6 739.8 c -3,-1.5 -3,-6.2 -1.2,-8.6" fill="none" stroke="#c18ca6" stroke-width="1"/>
<rect x="626.4" y="728.7" width="87.3" height="16.2" fill="#dbbdcc" rx="4"/>
<text x="632" y="740.8" font-size="15.2" fill="#000" textLength="59.62" lengthAdjust="spacingAndGlyphs">tgtPower</text>
<path d="M699.5 734.1 H705.5 L702.5 738.7 Z" fill="#a65b80"/>
<path d="M368.3 749.9 H383.3 l6 4 3 0 6 -4 H579.5 V830.4 H398.3 l-6 4 -3 0 -6 -4 H368.3 Z" fill="#7a4985" transform="translate(1,1)"/>
<path d="M368.3 749.9 H383.3 l6 4 3 0 6 -4 H579.5 V830.4 H398.3 l-6 4 -3 0 -6 -4 H368.3 Z" fill="#985ba6"/>
<path d="M368.8 830.4 V750.4 H383.3 l6 4 3 0 6 -4 H579.5" fill="none" stroke="#b78cc1" stroke-width="1"/>
<text x="378" y="768.4" font-size="15.2" fill="#fff" textLength="22.81" lengthAdjust="spacingAndGlyphs" stroke="#fff" stroke-width="0.35">call</text>
<rect x="406.3" y="756" width="76.5" height="16.2" fill="#d6bddb" rx="4"/>
<text x="412.1" y="768.1" font-size="15.2" fill="#000" textLength="64.99" lengthAdjust="spacingAndGlyphs">Telemetry</text>
<rect x="489.75" y="766.5" width="1.7" height="1.7" fill="#fff" fill-opacity="0.95"/>
<rect x="497.5" y="756" width="68.1" height="16.2" fill="#d6bddb" rx="4"/>
<text x="503.1" y="768.1" font-size="15.2" fill="#000" textLength="56.64" lengthAdjust="spacingAndGlyphs">addData</text>
<text x="537.2" y="794.9" font-size="15.2" fill="#fff" textLength="22.62" lengthAdjust="spacingAndGlyphs" stroke="#fff" stroke-width="0.35">key</text>
<text x="509.1" y="821.6" font-size="15.2" fill="#fff" textLength="50.71" lengthAdjust="spacingAndGlyphs" stroke="#fff" stroke-width="0.35">number</text>
<path d="M579.5 777.3 H737.7 V803.3 H579.5 V797.3 c 0,-10 -8,8 -8,-7.5 s 8,2.5 8,-7.5 Z" fill="#a7c1b8" transform="translate(1,1)"/>
<path d="M579.5 777.3 H737.7 V803.3 H579.5 V797.3 c 0,-10 -8,8 -8,-7.5 s 8,2.5 8,-7.5 Z" fill="#bddbd1"/>
<path d="M580 803.3 V797.3 M580 782.3 V777.8 H737.7 M574.2 793.9 c -3,-1.5 -3,-6.2 -1.2,-8.6" fill="none" stroke="#d1e6df" stroke-width="1"/>
<path d="M596.6 783.7 C593.4 784.9 591.6 787.3 591.6 790.1 A2.6 2.6 0 1 0 594 787.6 C594.2 786.3 595.2 785.3 596.6 784.7 Z" fill="#ffffff" fill-opacity="0.85"/>
<path d="M603.2 783.7 C600 784.9 598.2 787.3 598.2 790.1 A2.6 2.6 0 1 0 600.6 787.6 C600.8 786.3 601.8 785.3 603.2 784.7 Z" fill="#ffffff" fill-opacity="0.85"/>
<rect x="608.4" y="782.8" width="100.3" height="16.2" fill="#e5f1ed" rx="4"/>
<text x="615.1" y="794.9" font-size="15.2" fill="#000" textLength="88.13" lengthAdjust="spacingAndGlyphs">Target Power</text>
<path d="M714.3 792.9 C717.5 791.7 719.3 789.3 719.3 786.5 A2.6 2.6 0 1 0 716.9 789 C716.7 790.3 715.7 791.3 714.3 791.9 Z" fill="#ffffff" fill-opacity="0.85"/>
<path d="M720.9 792.9 C724.1 791.7 725.9 789.3 725.9 786.5 A2.6 2.6 0 1 0 723.5 789 C723.3 790.3 722.3 791.3 720.9 791.9 Z" fill="#ffffff" fill-opacity="0.85"/>
<path d="M579.5 804.2 H679.7 V830.2 H579.5 V824.2 c 0,-10 -8,8 -8,-7.5 s 8,2.5 8,-7.5 Z" fill="#854967" transform="translate(1,1)"/>
<path d="M579.5 804.2 H679.7 V830.2 H579.5 V824.2 c 0,-10 -8,8 -8,-7.5 s 8,2.5 8,-7.5 Z" fill="#a65b80"/>
<path d="M580 830.2 V824.2 M580 809.2 V804.7 H679.7 M574.2 820.8 c -3,-1.5 -3,-6.2 -1.2,-8.6" fill="none" stroke="#c18ca6" stroke-width="1"/>
<rect x="585.6" y="809.7" width="87.3" height="16.2" fill="#dbbdcc" rx="4"/>
<text x="591.2" y="821.8" font-size="15.2" fill="#000" textLength="59.62" lengthAdjust="spacingAndGlyphs">tgtPower</text>
<path d="M658.5 815.1 H664.6 L661.55 819.7 Z" fill="#a65b80"/>
<path d="M368.3 830.8 H383.3 l6 4 3 0 6 -4 H579.5 V911.3 H398.3 l-6 4 -3 0 -6 -4 H368.3 Z" fill="#7a4985" transform="translate(1,1)"/>
<path d="M368.3 830.8 H383.3 l6 4 3 0 6 -4 H579.5 V911.3 H398.3 l-6 4 -3 0 -6 -4 H368.3 Z" fill="#985ba6"/>
<path d="M368.8 911.3 V831.3 H383.3 l6 4 3 0 6 -4 H579.5" fill="none" stroke="#b78cc1" stroke-width="1"/>
<text x="378" y="849.3" font-size="15.2" fill="#fff" textLength="22.81" lengthAdjust="spacingAndGlyphs" stroke="#fff" stroke-width="0.35">call</text>
<rect x="406.3" y="836.9" width="76.5" height="16.2" fill="#d6bddb" rx="4"/>
<text x="412.1" y="849" font-size="15.2" fill="#000" textLength="64.99" lengthAdjust="spacingAndGlyphs">Telemetry</text>
<rect x="489.75" y="847.4" width="1.7" height="1.7" fill="#fff" fill-opacity="0.95"/>
<rect x="497.5" y="836.9" width="68.1" height="16.2" fill="#d6bddb" rx="4"/>
<text x="503.1" y="849" font-size="15.2" fill="#000" textLength="56.64" lengthAdjust="spacingAndGlyphs">addData</text>
<text x="537.2" y="875.8" font-size="15.2" fill="#fff" textLength="22.62" lengthAdjust="spacingAndGlyphs" stroke="#fff" stroke-width="0.35">key</text>
<text x="509.1" y="902.5" font-size="15.2" fill="#fff" textLength="50.71" lengthAdjust="spacingAndGlyphs" stroke="#fff" stroke-width="0.35">number</text>
<path d="M579.5 858.2 H734.3 V884.2 H579.5 V878.2 c 0,-10 -8,8 -8,-7.5 s 8,2.5 8,-7.5 Z" fill="#a7c1b8" transform="translate(1,1)"/>
<path d="M579.5 858.2 H734.3 V884.2 H579.5 V878.2 c 0,-10 -8,8 -8,-7.5 s 8,2.5 8,-7.5 Z" fill="#bddbd1"/>
<path d="M580 884.2 V878.2 M580 863.2 V858.7 H734.3 M574.2 874.8 c -3,-1.5 -3,-6.2 -1.2,-8.6" fill="none" stroke="#d1e6df" stroke-width="1"/>
<path d="M596.6 864.6 C593.4 865.8 591.6 868.2 591.6 871 A2.6 2.6 0 1 0 594 868.5 C594.2 867.2 595.2 866.2 596.6 865.6 Z" fill="#ffffff" fill-opacity="0.85"/>
<path d="M603.2 864.6 C600 865.8 598.2 868.2 598.2 871 A2.6 2.6 0 1 0 600.6 868.5 C600.8 867.2 601.8 866.2 603.2 865.6 Z" fill="#ffffff" fill-opacity="0.85"/>
<rect x="608.4" y="863.7" width="96.9" height="16.2" fill="#e5f1ed" rx="4"/>
<text x="615.1" y="875.8" font-size="15.2" fill="#000" textLength="84.38" lengthAdjust="spacingAndGlyphs">Motor Power</text>
<path d="M710.9 873.8 C714.1 872.6 715.9 870.2 715.9 867.4 A2.6 2.6 0 1 0 713.5 869.9 C713.3 871.2 712.3 872.2 710.9 872.8 Z" fill="#ffffff" fill-opacity="0.85"/>
<path d="M717.5 873.8 C720.7 872.6 722.5 870.2 722.5 867.4 A2.6 2.6 0 1 0 720.1 869.9 C719.9 871.2 718.9 872.2 717.5 872.8 Z" fill="#ffffff" fill-opacity="0.85"/>
<path d="M579.5 885.1 H772 V911.1 H579.5 V905.1 c 0,-10 -8,8 -8,-7.5 s 8,2.5 8,-7.5 Z" fill="#498568" transform="translate(1,1)"/>
<path d="M579.5 885.1 H772 V911.1 H579.5 V905.1 c 0,-10 -8,8 -8,-7.5 s 8,2.5 8,-7.5 Z" fill="#5ba682"/>
<path d="M580 911.1 V905.1 M580 890.1 V885.6 H772 M574.2 901.7 c -3,-1.5 -3,-6.2 -1.2,-8.6" fill="none" stroke="#8cc1a7" stroke-width="1"/>
</g>
<clipPath id="tbc"><rect x="0" y="270" width="243" height="618"/></clipPath>
<g clip-path="url(#tbc)">
<rect x="0" y="270" width="222" height="620" fill="#dddddd"/>
<rect x="222" y="270" width="20.9" height="620" fill="#f1f1f1"/>
<rect x="224.1" y="346.2" width="16.8" height="311.6" fill="#c1c1c1"/>
<path d="M228 284 L237.3 284 L232.65 278.8 Z" fill="#505050"/>
<path d="M227.8 875 L237.3 875 L232.55 880.1 Z" fill="#505050"/>
<text x="58.9" y="278.35" font-size="19.75" fill="#333842">DcMotor</text>
<path d="M38.8 263.65 L52.2 271.35 L38.8 279.05 Z" fill="#000"/>
<text x="58.9" y="309.6" font-size="19.75" fill="#333842" textLength="50.45" lengthAdjust="spacingAndGlyphs">Servo</text>
<defs><linearGradient id="sv" x1="0" y1="0" x2="1" y2="1"><stop offset="0" stop-color="#c9d8f2"/><stop offset="1" stop-color="#7f9ad0"/></linearGradient></defs>
<rect x="37.6" y="299.6" width="13.4" height="10" fill="url(#sv)" stroke="#4a66b0" stroke-width="1"/>
<rect x="37.1" y="298.6" width="14.4" height="2" fill="#3f5aa8"/>
<rect x="43.6" y="296" width="1.6" height="3" fill="#3f5aa8"/>
<rect x="39" y="295.6" width="10.6" height="1.3" fill="#4a66b0"/>
<text x="34.9" y="340.85" font-size="19.75" fill="#333842" textLength="71.57" lengthAdjust="spacingAndGlyphs">Sensors</text>
<path d="M14.8 326.15 L28.2 333.85 L14.8 341.55 Z" fill="#000"/>
<text x="34.9" y="372.1" font-size="19.75" fill="#333842">Other Devices</text>
<text x="34.9" y="403.35" font-size="19.75" fill="#333842">Android</text>
<path d="M14.8 388.65 L28.2 396.35 L14.8 404.05 Z" fill="#000"/>
<text x="34.9" y="434.6" font-size="19.75" fill="#333842" textLength="62.96" lengthAdjust="spacingAndGlyphs">Utilities</text>
<path d="M13.1 421.6 L28.8 421.6 L20.95 434.8 Z" fill="#000"/>
<text x="58.9" y="465.85" font-size="19.75" fill="#333842">Acceleration</text>
<text x="58.9" y="497.1" font-size="19.75" fill="#333842">AngleUnit</text>
<text x="58.9" y="528.35" font-size="19.75" fill="#333842">AngularVelocity</text>
<text x="58.9" y="559.6" font-size="19.75" fill="#333842">Axis</text>
<text x="58.7" y="590.85" font-size="19.75" fill="#333842" textLength="46.7" lengthAdjust="spacingAndGlyphs">Color</text>
<defs><radialGradient id="cr" cx="0.4" cy="0.3" r="0.7"><stop offset="0" stop-color="#f0a0a0"/><stop offset="1" stop-color="#b03038"/></radialGradient><radialGradient id="cb" cx="0.4" cy="0.3" r="0.7"><stop offset="0" stop-color="#a0c4ff"/><stop offset="1" stop-color="#2858c8"/></radialGradient><radialGradient id="cg" cx="0.4" cy="0.3" r="0.7"><stop offset="0" stop-color="#90e090"/><stop offset="1" stop-color="#188028"/></radialGradient></defs>
<circle cx="44.6" cy="576.8" r="4.7" fill="url(#cr)"/>
<circle cx="39.5" cy="586.8" r="4.7" fill="url(#cb)"/>
<circle cx="49.6" cy="586.8" r="4.7" fill="url(#cg)"/>
<text x="58.9" y="622.1" font-size="19.75" fill="#333842">DbgLog</text>
<text x="58.9" y="653.35" font-size="19.75" fill="#333842">MagneticFlux</text>
<text x="58.9" y="684.6" font-size="19.75" fill="#333842">Matrix</text>
<text x="58.9" y="715.85" font-size="19.75" fill="#333842">Orientation</text>
<text x="58.9" y="747.1" font-size="19.75" fill="#333842">PIDFCoefficients</text>
<text x="58.9" y="778.35" font-size="19.75" fill="#333842">Position</text>
<text x="58.9" y="809.6" font-size="19.75" fill="#333842">Quaternion</text>
<text x="58.9" y="840.85" font-size="19.75" fill="#333842">Range</text>
<text x="58.9" y="872.1" font-size="19.75" fill="#333842">Telemetry</text>
</g>
<rect x="1180" y="396.4" width="12" height="266" fill="#c9c9c9" rx="6"/>
<rect x="519" y="872.7" width="579.8" height="12" fill="#c9c9c9" rx="6"/>
<circle cx="1132.2" cy="727.6" r="14" fill="none" stroke="#d2d2d2" stroke-width="2"/>
<circle cx="1132.2" cy="727.6" r="5" fill="#d2d2d2"/>
<path d="M1132.2 708.4 V713.6 M1132.2 741.6 V746.8 M1113 727.6 H1118.2 M1146.2 727.6 H1151.4" fill="none" stroke="#d2d2d2" stroke-width="2"/>
<circle cx="1132.2" cy="781.3" r="18.8" fill="none" stroke="#d2d2d2" stroke-width="2"/>
<path d="M1123.4 781.3 H1141 M1132.2 772.5 V790.1" fill="none" stroke="#d2d2d2" stroke-width="2"/>
<circle cx="1132.2" cy="823.8" r="18.8" fill="none" stroke="#d2d2d2" stroke-width="2"/>
<path d="M1123.4 823.8 H1141" fill="none" stroke="#d2d2d2" stroke-width="2"/>
<rect x="0" y="0" width="1197" height="1" fill="#2f77c4"/>
<rect x="0" y="0" width="1" height="890" fill="#33699f"/>
<rect x="1" y="270" width="1" height="618" fill="#c6e8fc"/>
<rect x="1195.8" y="0" width="1.2" height="890" fill="#2f77c4"/>
<rect x="1195.1" y="54" width="0.7" height="836" fill="#d6eafa"/>
<rect x="0" y="887.9" width="1197" height="0.8" fill="#c6e8fc"/>
<rect x="0" y="888.7" width="1197" height="1.3" fill="#2f6fb2"/>
</svg>
</body></html>
